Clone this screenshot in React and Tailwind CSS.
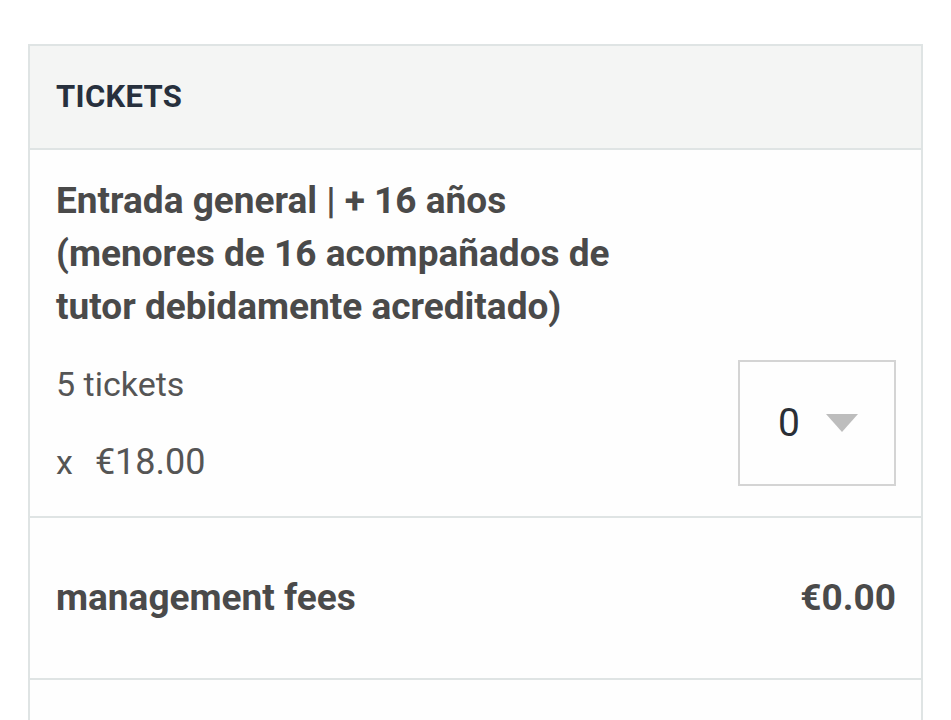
import React from 'react';

const TicketRow = ({ title, available, price, qty }) => (
  <div className="border-b-2 border-[#dfe4e4] pl-[26px] pr-[25px] pt-[24px] pb-[30px]">
    <div className="text-[37px] font-bold leading-[53px] text-[#4a4a4a] max-w-[580px]">{title}</div>
    <div className="mt-[27px] flex items-center justify-between">
      <div className="text-[#555555] text-[34px]">
        <div className="leading-[40px]">{available}</div>
        <div className="mt-[38px] leading-[40px]">
          <span className="mr-[22px]">x</span>
          <span className="text-[36px]">{price}</span>
        </div>
      </div>
      <div className="w-[158px] h-[126px] border-2 border-[#d4d4d4] flex items-center justify-center gap-[26px] pl-[2px]">
        <span className="text-[39px] text-[#2a2f36]">{qty}</span>
        <svg width="32" height="18" viewBox="0 0 32 18">
          <polygon points="0,0 32,0 16,18" fill="#bdbdbd" />
        </svg>
      </div>
    </div>
  </div>
);

const App = () => {
  return (
    <div className="min-h-[720px] bg-white pt-[44px] pl-[28px] pr-[28px]" style={{ fontFamily: 'Roboto, "Noto Sans", sans-serif' }}>
      <div className="border-x-2 border-t-2 border-[#dfe4e4] min-h-[676px] bg-[#fefefe]">
        <div className="h-[104px] bg-[#f4f5f4] border-b-2 border-[#dfe4e4] px-[26px] flex items-center">
          <h2 className="text-[31px] font-bold text-[#27303d] tracking-[0.3px]">TICKETS</h2>
        </div>
        <TicketRow
          title="Entrada general | + 16 años (menores de 16 acompañados de tutor debidamente acreditado)"
          available="5 tickets"
          price="€18.00"
          qty="0"
        />
        <div className="h-[162px] border-b-2 border-[#dfe4e4] pl-[26px] pr-[25px] flex items-center justify-between text-[37px] font-bold text-[#4a4a4a]">
          <span>management fees</span>
          <span>€0.00</span>
        </div>
      </div>
    </div>
  );
};

export default App;
